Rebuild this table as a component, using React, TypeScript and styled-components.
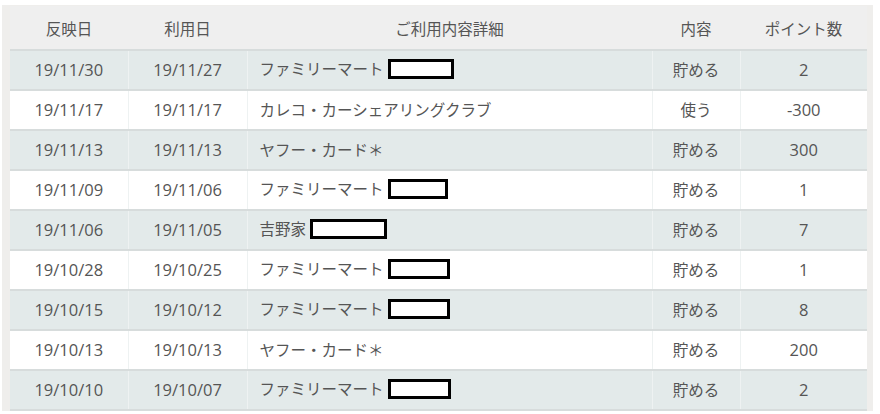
import React from "react";
import styled, { createGlobalStyle } from "styled-components";

const Global = createGlobalStyle`
  html, body { margin: 0; padding: 0; background: #ffffff; }
  body { font-family: "Noto Sans CJK JP", "Noto Sans", sans-serif; }
`;

const Frame = styled.div`
  margin: 5px 7px 0 2px;
  padding: 1px 6px 0 8px;
  background: #efeeec;
`;

const Table = styled.table`
  width: 100%;
  border-collapse: collapse;
  table-layout: fixed;
  font-size: 15.5px;
  color: #555555;
`;

const Th = styled.th<{ $w?: number }>`
  width: ${(p) => (p.$w ? `${p.$w}px` : "auto")};
  height: 43px;
  font-weight: normal;
  text-align: center;
  background: #efefef;
  border-bottom: 2px solid #d7dcdc;
  padding: 0;
`;

const Row = styled.tr<{ $alt: boolean }>`
  background: ${(p) => (p.$alt ? "#e3eaea" : "#ffffff")};
`;

const Td = styled.td<{ $left?: boolean; $num?: boolean }>`
  height: 36px;
  padding: 0 ${(p) => (p.$left ? "12px" : "0")} 2px;
  text-align: ${(p) => (p.$left ? "left" : "center")};
  border-bottom: 2px solid #d7dcdc;
  border-left: 1px solid #eef2f2;
  white-space: nowrap;
  ${(p) => (p.$num ? `font-family: "Open Sans", "Noto Sans CJK JP", sans-serif; font-size: 16.5px;` : "")}
  &:first-child { border-left: none; }
`;

const Redact = styled.span<{ $w: number }>`
  display: inline-block;
  vertical-align: middle;
  width: ${(p) => p.$w}px;
  height: 14px;
  margin-left: 4px;
  border: 3px solid #000;
  background: #fff;
  position: relative;
  top: -2px;
`;

type R = { d1: string; d2: string; name: string; box?: number; kind: string; pt: string };

const rows: R[] = [
  { d1: "19/11/30", d2: "19/11/27", name: "ファミリーマート", box: 60, kind: "貯める", pt: "2" },
  { d1: "19/11/17", d2: "19/11/17", name: "カレコ・カーシェアリングクラブ", kind: "使う", pt: "-300" },
  { d1: "19/11/13", d2: "19/11/13", name: "ヤフー・カード＊", kind: "貯める", pt: "300" },
  { d1: "19/11/09", d2: "19/11/06", name: "ファミリーマート", box: 54, kind: "貯める", pt: "1" },
  { d1: "19/11/06", d2: "19/11/05", name: "吉野家", box: 71, kind: "貯める", pt: "7" },
  { d1: "19/10/28", d2: "19/10/25", name: "ファミリーマート", box: 56, kind: "貯める", pt: "1" },
  { d1: "19/10/15", d2: "19/10/12", name: "ファミリーマート", box: 56, kind: "貯める", pt: "8" },
  { d1: "19/10/13", d2: "19/10/13", name: "ヤフー・カード＊", kind: "貯める", pt: "200" },
  { d1: "19/10/10", d2: "19/10/07", name: "ファミリーマート", box: 57, kind: "貯める", pt: "2" },
];

export default function App() {
  return (
    <>
      <Global />
      <Frame>
        <Table>
          <thead>
            <tr>
              <Th $w={118}>反映日</Th>
              <Th $w={119}>利用日</Th>
              <Th>ご利用内容詳細</Th>
              <Th $w={88}>内容</Th>
              <Th $w={127}>ポイント数</Th>
            </tr>
          </thead>
          <tbody>
            {rows.map((r, i) => (
              <Row key={i} $alt={i % 2 === 0}>
                <Td $num>{r.d1}</Td>
                <Td $num>{r.d2}</Td>
                <Td $left>
                  {r.name}
                  {r.box ? <Redact $w={r.box} /> : null}
                </Td>
                <Td>{r.kind}</Td>
                <Td $num>{r.pt}</Td>
              </Row>
            ))}
          </tbody>
        </Table>
      </Frame>
    </>
  );
}
